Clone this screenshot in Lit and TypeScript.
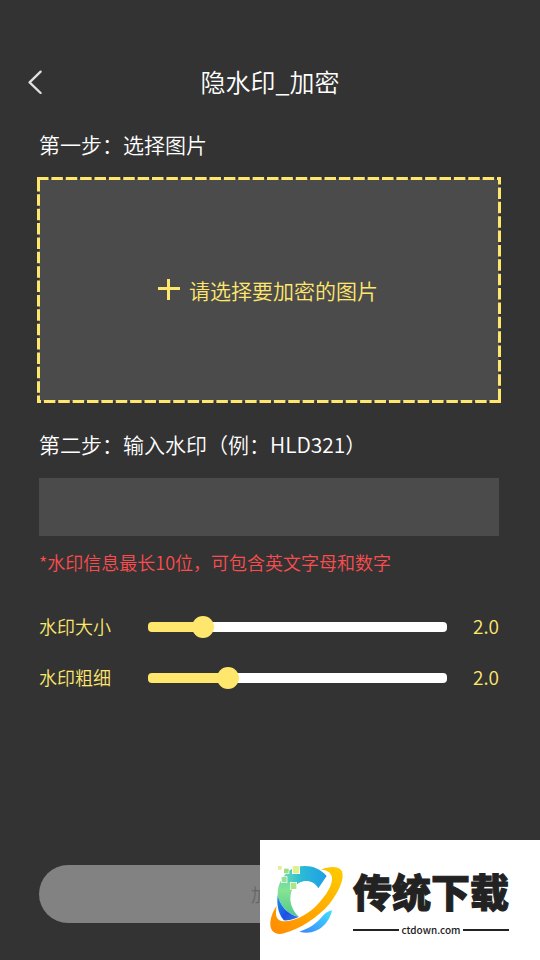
import { LitElement, html, css, svg } from "lit";
import { customElement, property, state } from "lit/decorators.js";

@customElement("labeled-slider")
class LabeledSlider extends LitElement {
  static styles = css`
    :host {
      display: block;
    }
    .row {
      display: grid;
      grid-template-columns: 109px 1fr 52px;
      align-items: center;
      height: 51px;
      color: #ffe76e;
      font-size: 18px;
      line-height: 26px;
    }
    .name {
      padding-bottom: 2px;
    }
    .value {
      padding-bottom: 2px;
      font-size: 19px;
      text-align: right;
    }
    .range {
      appearance: none;
      -webkit-appearance: none;
      display: block;
      width: 100%;
      height: 22px;
      margin: 0;
      background: transparent;
    }
    .range::-webkit-slider-runnable-track {
      height: 10px;
      border-radius: 4px;
      background: linear-gradient(
        to right,
        #ffe76e var(--fill),
        #ffffff var(--fill)
      );
    }
    .range::-webkit-slider-thumb {
      -webkit-appearance: none;
      width: 22px;
      height: 22px;
      margin-top: -6px;
      border: none;
      border-radius: 50%;
      background: #ffe76e;
    }
  `;

  @property() label = "";
  @property() display = "";
  @property({ type: Number }) position = 0;

  private onInput(e: Event) {
    this.position = Number((e.target as HTMLInputElement).value);
  }

  render() {
    return html`
      <div class="row">
        <label class="name" for="range">${this.label}</label>
        <input
          id="range"
          class="range"
          type="range"
          min="0"
          max="100"
          .value=${String(this.position)}
          style="--fill: ${this.position}%"
          @input=${this.onInput}
        />
        <output class="value" for="range">${this.display}</output>
      </div>
    `;
  }
}

const backIcon = svg`
  <svg class="back-icon" viewBox="0 0 14 24" fill="none" stroke="#e0e0e0" stroke-width="2.3" stroke-linecap="round" stroke-linejoin="round">
    <path d="M12.6 1.6 L1.6 12.4 L12.6 23" />
  </svg>`;

const siteLogo = svg`
  <svg class="site-logo" viewBox="0 0 270 360">
    <defs>
      <linearGradient id="arc" x1="0" y1="0" x2="1" y2="0">
        <stop offset="0" stop-color="#5ad4b8" />
        <stop offset="0.35" stop-color="#2bbad6" />
        <stop offset="1" stop-color="#1e9fe6" />
      </linearGradient>
      <linearGradient id="leaf" x1="0" y1="0" x2="0" y2="1">
        <stop offset="0" stop-color="#4fcfc0" />
        <stop offset="0.45" stop-color="#86e392" />
        <stop offset="1" stop-color="#4fc98c" />
      </linearGradient>
      <linearGradient id="deep" x1="0" y1="0" x2="1" y2="1">
        <stop offset="0" stop-color="#1b9ae6" />
        <stop offset="0.55" stop-color="#1d50e4" />
        <stop offset="1" stop-color="#3480f8" />
      </linearGradient>
      <linearGradient id="ring" x1="1" y1="0" x2="0" y2="1">
        <stop offset="0" stop-color="#ffcc00" />
        <stop offset="1" stop-color="#ff8a00" />
      </linearGradient>
      <linearGradient id="wave" x1="0" y1="1" x2="1" y2="0">
        <stop offset="0" stop-color="#3b86f7" />
        <stop offset="1" stop-color="#3fe0ff" />
      </linearGradient>
    </defs>
    <path fill="url(#leaf)" d="M100 86 C70 100 52 130 53 166 C62 202 86 224 117 231 C96 210 88 186 92 164 C96 142 108 130 128 124 L140 90 Z" />
    <path fill="url(#arc)" d="M84 94 C120 70 168 72 200 108 L175 145 C162 123 138 118 116 129 L104 138 L84 124 Z" />
    <path fill="url(#deep)" d="M53 165 C60 198 84 225 118 231 C108 242 94 246 77 247 C56 226 49 198 53 165 Z" />
    <path fill="url(#wave)" d="M216 211 C208 252 168 290 118 275 C150 264 168 250 186 230 C196 218 206 213 216 211 Z" />
    <path fill="url(#ring)" stroke="#ffffff" stroke-width="5" paint-order="stroke" d="M183 89 C208 78 238 77 246 94 C254 116 238 154 208 192 C174 232 120 267 72 280 C44 287 29 272 31 246 C33 228 40 211 50 197 C46 220 46 238 64 243 C92 248 134 230 166 200 C200 166 222 130 215 108 C210 95 200 90 183 89 Z" />
    <g stroke="#ffffff" stroke-width="4" paint-order="stroke">
      <rect x="54" y="78" width="11" height="11" fill="#e6ee90" />
      <rect x="72" y="86" width="14" height="14" fill="#9edc80" />
      <rect x="98" y="78" width="20" height="22" fill="#e0f090" />
      <rect x="65" y="111" width="15" height="16" fill="#97e09c" />
      <rect x="92" y="128" width="17" height="19" fill="#ace489" />
    </g>
  </svg>`;

@customElement("app-root")
class AppRoot extends LitElement {
  static styles = css`
    :host {
      display: block;
      font-family: "Noto Sans CJK SC", sans-serif;
      font-weight: 350;
      color: #ffffff;
    }
    .page {
      box-sizing: border-box;
      display: flex;
      flex-direction: column;
      min-height: 100vh;
      padding: 62px 41px 37px 39px;
      background: #333333;
    }
    button {
      border: none;
      padding: 0;
      font-family: inherit;
      font-weight: inherit;
    }
    .header {
      display: grid;
      grid-template-columns: 40px 1fr 38px;
      align-items: start;
      height: 40px;
      margin: 0 -20px;
    }
    .back {
      display: flex;
      align-items: center;
      justify-content: center;
      width: 32px;
      height: 40px;
      background: none;
    }
    .back-icon {
      width: 14px;
      height: 24px;
    }
    .title {
      margin: 0;
      font-size: 25px;
      line-height: 38px;
      font-weight: inherit;
      text-align: center;
    }
    .step {
      margin: 0;
      font-size: 21px;
      line-height: 30px;
      font-weight: inherit;
    }
    .step-image {
      margin-top: 27px;
    }
    .step-text {
      margin-top: 28px;
    }
    .picker {
      position: relative;
      display: flex;
      align-items: center;
      justify-content: center;
      gap: 9px;
      box-sizing: border-box;
      width: 100%;
      height: 222px;
      margin-top: 20px;
      padding-right: 2px;
      background: #4b4b4b;
      color: #ffe76e;
      font-size: 21px;
      line-height: 30px;
    }
    .dashes {
      position: absolute;
      top: -2px;
      left: -2px;
      width: calc(100% + 4px);
      height: calc(100% + 4px);
    }
    .plus {
      width: 22px;
      height: 22px;
    }
    .mark-input {
      box-sizing: border-box;
      width: 100%;
      height: 58px;
      margin: 19px 0 0;
      padding: 0 16px;
      border: none;
      outline: none;
      background: #4b4b4b;
      color: #ffffff;
      font-family: inherit;
      font-size: 21px;
    }
    .hint {
      margin: 13px 0 0;
      font-size: 18px;
      line-height: 26px;
      color: #fb4d4f;
    }
    .sliders {
      margin: 26px 0;
    }
    .submit {
      width: 100%;
      height: 58px;
      margin-top: auto;
      border-radius: 29px;
      background: #828282;
      color: #666666;
      font-size: 18px;
    }
    .watermark {
      position: fixed;
      right: 0;
      bottom: 0;
      display: flex;
      width: 280px;
      height: 120px;
      background: #ffffff;
      color: #222222;
    }
    .site-logo {
      width: 90px;
      height: 120px;
    }
    .site {
      display: flex;
      flex-direction: column;
      width: 156px;
      margin-left: 3px;
      padding-top: 25px;
    }
    .site-name {
      font-size: 39px;
      line-height: 50px;
      font-weight: 900;
      white-space: nowrap;
      -webkit-text-stroke: 1px #222222;
    }
    .site-url {
      display: flex;
      align-items: center;
      gap: 2px;
      margin-top: 7px;
      font-size: 10px;
      line-height: 16px;
      font-weight: 500;
    }
    .site-url::before,
    .site-url::after {
      content: "";
      flex: 1;
      height: 2px;
      background: #222222;
    }
  `;

  @state() private mark = "";

  render() {
    return html`
      <main class="page">
        <header class="header">
          <button class="back" type="button" aria-label="返回">${backIcon}</button>
          <h1 class="title">隐水印_加密</h1>
        </header>

        <h2 class="step step-image">第一步：选择图片</h2>
        <button class="picker" type="button">
          <svg class="dashes" aria-hidden="true">
            <rect
              width="100%"
              height="100%"
              fill="none"
              stroke="#ffe76e"
              stroke-width="6"
              pathLength="480"
              stroke-dasharray="4 1"
            />
          </svg>
          <svg class="plus" viewBox="0 0 22 22" fill="#ffe76e" aria-hidden="true">
            <rect x="0" y="8" width="22" height="3" />
            <rect x="9" y="0" width="3" height="21" />
          </svg>
          <span>请选择要加密的图片</span>
        </button>

        <label class="step step-text" for="mark">第二步：输入水印（例：HLD321）</label>
        <input
          id="mark"
          class="mark-input"
          type="text"
          maxlength="10"
          .value=${this.mark}
          @input=${(e: Event) => (this.mark = (e.target as HTMLInputElement).value)}
        />
        <p class="hint">*水印信息最长10位，可包含英文字母和数字</p>

        <section class="sliders">
          <labeled-slider label="水印大小" display="2.0" position="16"></labeled-slider>
          <labeled-slider label="水印粗细" display="2.0" position="25"></labeled-slider>
        </section>

        <button class="submit" type="button">加密</button>
      </main>

      <aside class="watermark">
        ${siteLogo}
        <div class="site">
          <span class="site-name">传统下载</span>
          <span class="site-url">ctdown.com</span>
        </div>
      </aside>
    `;
  }
}
